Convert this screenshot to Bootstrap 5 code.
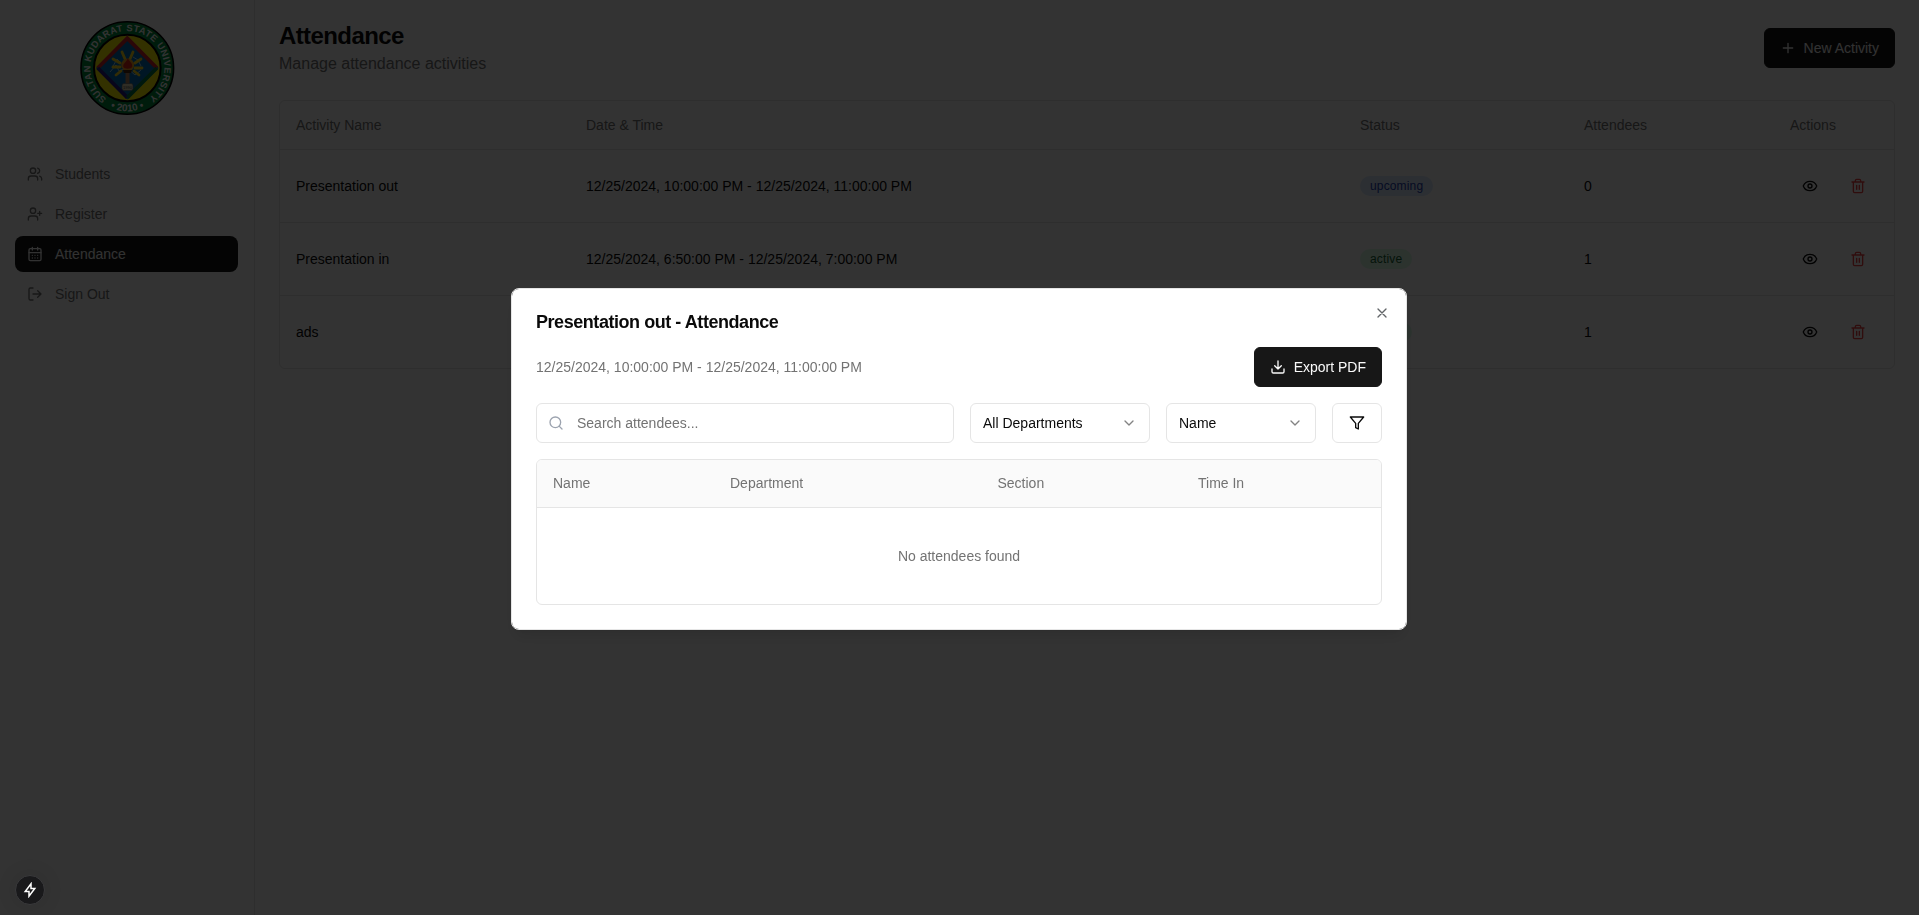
<!DOCTYPE html>
<html lang="en">
<head>
<meta charset="utf-8">
<meta name="viewport" content="width=device-width, initial-scale=1">
<title>Attendance</title>
<link href="https://cdn.jsdelivr.net/npm/bootstrap@5.3.0/dist/css/bootstrap.min.css" rel="stylesheet">
<style>
  body { font-family: "Liberation Sans", Arial, sans-serif; font-size: 14px; line-height: 20px; color: #0a0a0a; background: #fff; overflow: hidden; }
  .ico { width: 16px; height: 16px; flex: none; fill: none; stroke: currentColor; stroke-width: 2; stroke-linecap: round; stroke-linejoin: round; }
  .muted { color: #737373; }
  .danger-ico { color: #ef4444; }
  .side { width: 255px; border-right: 1px solid #e5e5e5; padding: 20px 16px 0 15px; }
  .seal { width: 96px; height: 96px; margin-left: 64px; margin-bottom: 40px; }
  .side .nav { gap: 4px; }
  .side .nav-link { height: 36px; padding: 0 12px; gap: 12px; color: #737373; border-radius: 8px; }
  .side .nav-link.active { background: #171717; color: #fafafa; }
  .content { padding: 20px 24px; }
  .page-title { font-size: 24px; line-height: 32px; font-weight: 700; letter-spacing: -.6px; }
  .page-sub { font-size: 16px; line-height: 24px; }
  .btn-dark-solid { --bs-btn-bg: #171717; --bs-btn-color: #fafafa; --bs-btn-border-color: #171717; --bs-btn-hover-bg: #333; --bs-btn-hover-color: #fafafa; height: 40px; padding: 0 15px; gap: 8px; font-size: 14px; line-height: 20px; border-radius: 6px; }
  .frame { border: 1px solid #e5e5e5; border-radius: 6px; overflow: hidden; }
  .frame .table { --bs-table-bg: transparent; table-layout: fixed; border-collapse: separate; border-spacing: 0; color: inherit; }
  .frame .table > :not(caption) > * > * { padding: 0 16px; border-bottom: 1px solid #e5e5e5; vertical-align: middle; font-weight: 400; color: inherit; }
  .frame .table > tbody > tr:last-child > * { border-bottom: 0; }
  .frame .table > thead > tr > * { height: 49px; color: #737373; }
  .activities > tbody > tr > td { height: 73px; }
  .activities > tbody > tr:last-child > td { height: 72px; }
  .act { width: 40px; height: 40px; }
  .pill { display: block; width: fit-content; font-size: 12px; line-height: 16px; padding: 2px 10px; border-radius: 10px; letter-spacing: .15px; }
  .pill-up { background: #dbeafe; color: #1e40af; }
  .pill-on { background: #dcfce7; color: #166534; }
  .modal-backdrop { --bs-backdrop-opacity: .8; }
  .att-modal { padding-right: 1px; }
  .modal-dialog { --bs-modal-width: 896px; margin-top: 288px; }
  .modal-content { border: 1px solid #e5e5e5; border-radius: 8px; padding: 24px; gap: 16px; color: #0a0a0a; box-shadow: 0 10px 15px -3px rgba(0,0,0,.1), 0 4px 6px -4px rgba(0,0,0,.1); }
  .dlg-title { font-size: 18px; line-height: 18px; font-weight: 700; letter-spacing: -.45px; }
  .dlg-close { position: absolute; top: 16px; right: 16px; opacity: .7; line-height: 0; }
  .field { height: 40px; border: 1px solid #e5e5e5; border-radius: 6px; padding: 0 12px; font-size: 14px; background: #fff; color: #0a0a0a; }
  .search-ico { position: absolute; left: 12px; top: 12px; color: #9ca3af; }
  .search-in { width: 100%; padding-left: 40px; }
  .search-in::placeholder { color: #737373; opacity: 1; }
  .chev { opacity: .5; }
  .attendees > thead { background: #fafafa; }
  .frame .attendees > thead > tr > * { height: 48px; padding-bottom: 1px; }
  .attendees > tbody > tr > td { height: 96px; }
  .dev-badge { position: fixed; left: 15px; bottom: 10px; width: 30px; height: 30px; z-index: 2000; border-radius: 50%; background: #19191b; border: 1px solid #3a3a3c; color: #fff; box-shadow: 0 0 20px rgba(0,0,0,.12); }
  .dev-badge .ico { stroke-width: 1.5; stroke-linecap: butt; stroke-linejoin: miter; }
</style>
</head>
<body>
<svg class="d-none">
  <symbol id="eye" viewBox="0 0 24 24"><path d="M2.06 12.35a1 1 0 0 1 0-.7 10.75 10.75 0 0 1 19.88 0 1 1 0 0 1 0 .7 10.75 10.75 0 0 1-19.88 0"/><circle cx="12" cy="12" r="3"/></symbol>
  <symbol id="trash" viewBox="0 0 24 24"><path d="M3 6h18M19 6v14c0 1-1 2-2 2H7c-1 0-2-1-2-2V6M8 6V4c0-1 1-2 2-2h4c1 0 2 1 2 2v2M10 11v6M14 11v6"/></symbol>
  <symbol id="chevron" viewBox="0 0 24 24"><path d="m6 9 6 6 6-6"/></symbol>
</svg>

<div class="d-flex vh-100">
  <aside class="side flex-shrink-0">
    <svg class="seal d-block" viewBox="0 0 96 96">
      <defs>
        <path id="ring-top" d="M27.6 78.7A37 37 0 1 1 69 78.7"/>
        <path id="ring-bottom" d="M20.5 81.2A43.3 43.3 0 0 0 76.1 81.2"/>
      </defs>
      <circle cx="48.3" cy="48" r="46.3" fill="#008a3c" stroke="#000" stroke-width="1.6"/>
      <circle cx="48.3" cy="48" r="33.3" fill="#fff200" stroke="#000" stroke-width="2"/>
      <path d="M48.3 16.5 17 48l31.3 31.5L79.6 48z" fill="#0070b8"/>
      <path d="M18.8 48 48.3 18.3 77.8 48" fill="none" stroke="#d8232a" stroke-width="3.8"/>
      <path d="M18.8 48 48.3 77.7" fill="none" stroke="#2c1a85" stroke-width="3.8"/>
      <path d="M77.8 48 48.3 77.7" fill="none" stroke="#007a40" stroke-width="3.8"/>
      <path d="m31 52 6-7 3 6 8-3 8 7 6-5M33 48l5-9 4 4M54 37l5 3 3 6" fill="none" stroke="#9ed2ee" stroke-width="1"/>
      <g stroke="#ffdb1a" stroke-width="2.8" stroke-linecap="round">
        <path d="M43 32l3 7M54 32l-3 7M34 39l7 4M62 39l-6 4M34 47h7M63 48h-7M37 55l5-4M60 55l-5-4"/>
      </g>
      <circle cx="48.7" cy="45" r="6.5" fill="#f5a623"/>
      <path d="M48.7 38c1 3 5 5 4.5 8.5-.5 3-8.5 3-9 0C44 43 48 42 48.7 38z" fill="#e02418"/>
      <path d="M44 50h9l-1 3h-7z" fill="#4b2a12"/>
      <path d="M46.5 53h4v11h-4z" fill="#b08060"/>
      <rect x="43" y="63.5" width="11" height="7" rx="2" fill="#e9dfb8" stroke="#666" stroke-width=".6"/>
      <text x="48.5" y="68.5" font-size="4" text-anchor="middle" fill="#444">1990</text>
      <g fill="#fff" font-family="Liberation Sans, Arial, sans-serif" font-weight="700">
        <text font-size="9.3"><textPath href="#ring-top" textLength="187" lengthAdjust="spacing">SULTAN KUDARAT STATE UNIVERSITY</textPath></text>
        <text font-size="10" text-anchor="middle"><textPath href="#ring-bottom" startOffset="50%">• 2010 •</textPath></text>
      </g>
    </svg>
    <nav class="nav flex-column">
      <a class="nav-link d-flex align-items-center" href="#"><svg class="ico" viewBox="0 0 24 24"><path d="M16 21v-2a4 4 0 0 0-4-4H6a4 4 0 0 0-4 4v2"/><circle cx="9" cy="7" r="4"/><path d="M22 21v-2a4 4 0 0 0-3-3.87M16 3.13a4 4 0 0 1 0 7.75"/></svg>Students</a>
      <a class="nav-link d-flex align-items-center" href="#"><svg class="ico" viewBox="0 0 24 24"><path d="M16 21v-2a4 4 0 0 0-4-4H6a4 4 0 0 0-4 4v2"/><circle cx="9" cy="7" r="4"/><path d="M19 8v6M22 11h-6"/></svg>Register</a>
      <a class="nav-link active d-flex align-items-center" href="#"><svg class="ico" viewBox="0 0 24 24"><path d="M8 2v4M16 2v4"/><rect width="18" height="18" x="3" y="4" rx="2"/><path d="M3 10h18M8 14h.01M12 14h.01M16 14h.01M8 18h.01M12 18h.01M16 18h.01"/></svg>Attendance</a>
      <a class="nav-link d-flex align-items-center" href="#"><svg class="ico" viewBox="0 0 24 24"><path d="M9 21H5a2 2 0 0 1-2-2V5a2 2 0 0 1 2-2h4M16 17l5-5-5-5M21 12H9"/></svg>Sign Out</a>
    </nav>
  </aside>

  <main class="content flex-grow-1">
    <div class="d-flex justify-content-between align-items-center mb-4">
      <div>
        <h1 class="page-title m-0">Attendance</h1>
        <p class="page-sub muted m-0">Manage attendance activities</p>
      </div>
      <button class="btn btn-dark-solid d-flex align-items-center"><svg class="ico" viewBox="0 0 24 24"><path d="M5 12h14M12 5v14"/></svg>New Activity</button>
    </div>
    <div class="frame">
      <table class="table activities m-0">
        <colgroup><col style="width:290px"><col style="width:774px"><col style="width:224px"><col style="width:206px"><col></colgroup>
        <thead><tr><th>Activity Name</th><th>Date &amp; Time</th><th>Status</th><th>Attendees</th><th>Actions</th></tr></thead>
        <tbody>
          <tr><td>Presentation out</td><td>12/25/2024, 10:00:00 PM - 12/25/2024, 11:00:00 PM</td><td><span class="pill pill-up">upcoming</span></td><td>0</td>
            <td><div class="d-flex gap-2"><span class="act d-flex align-items-center justify-content-center"><svg class="ico"><use href="#eye"/></svg></span><span class="act d-flex align-items-center justify-content-center danger-ico"><svg class="ico"><use href="#trash"/></svg></span></div></td></tr>
          <tr><td>Presentation in</td><td>12/25/2024, 6:50:00 PM - 12/25/2024, 7:00:00 PM</td><td><span class="pill pill-on">active</span></td><td>1</td>
            <td><div class="d-flex gap-2"><span class="act d-flex align-items-center justify-content-center"><svg class="ico"><use href="#eye"/></svg></span><span class="act d-flex align-items-center justify-content-center danger-ico"><svg class="ico"><use href="#trash"/></svg></span></div></td></tr>
          <tr><td>ads</td><td></td><td><span class="pill pill-on">active</span></td><td>1</td>
            <td><div class="d-flex gap-2"><span class="act d-flex align-items-center justify-content-center"><svg class="ico"><use href="#eye"/></svg></span><span class="act d-flex align-items-center justify-content-center danger-ico"><svg class="ico"><use href="#trash"/></svg></span></div></td></tr>
        </tbody>
      </table>
    </div>
  </main>
</div>

<div class="modal-backdrop show"></div>
<div class="modal att-modal d-block" tabindex="-1" role="dialog">
  <div class="modal-dialog">
    <div class="modal-content">
      <h2 class="dlg-title m-0">Presentation out - Attendance</h2>
      <button class="dlg-close btn p-0 border-0" aria-label="Close"><svg class="ico" viewBox="0 0 24 24"><path d="M18 6 6 18M6 6l12 12"/></svg></button>
      <div class="d-flex justify-content-between align-items-center">
        <span class="muted">12/25/2024, 10:00:00 PM - 12/25/2024, 11:00:00 PM</span>
        <button class="btn btn-dark-solid d-flex align-items-center"><svg class="ico" viewBox="0 0 24 24"><path d="M21 15v4a2 2 0 0 1-2 2H5a2 2 0 0 1-2-2v-4M7 10l5 5 5-5M12 15V3"/></svg>Export PDF</button>
      </div>
      <div class="d-flex gap-3">
        <div class="position-relative flex-grow-1">
          <svg class="ico search-ico" viewBox="0 0 24 24"><circle cx="11" cy="11" r="8"/><path d="m21 21-4.3-4.3"/></svg>
          <input class="field search-in" type="text" placeholder="Search attendees...">
        </div>
        <button class="field d-flex align-items-center justify-content-between" style="width:180px">All Departments<svg class="ico chev"><use href="#chevron"/></svg></button>
        <button class="field d-flex align-items-center justify-content-between" style="width:150px">Name<svg class="ico chev"><use href="#chevron"/></svg></button>
        <button class="field d-flex align-items-center justify-content-center" style="width:50px" aria-label="Filter"><svg class="ico" viewBox="0 0 24 24"><path d="M22 3H2l8 9.46V19l4 2v-8.54z"/></svg></button>
      </div>
      <div class="frame">
        <table class="table attendees m-0">
          <colgroup><col style="width:177px"><col style="width:267.5px"><col style="width:200.5px"><col></colgroup>
          <thead><tr><th>Name</th><th>Department</th><th>Section</th><th>Time In</th></tr></thead>
          <tbody><tr><td colspan="4" class="text-center"><span class="muted">No attendees found</span></td></tr></tbody>
        </table>
      </div>
    </div>
  </div>
</div>

<div class="dev-badge d-flex align-items-center justify-content-center"><svg class="ico" viewBox="0 0 16 16"><path d="M9 1.8v4.6h3.8L7 14.2V9.6H3.200z"/></svg></div>
<script src="https://cdn.jsdelivr.net/npm/bootstrap@5.3.0/dist/js/bootstrap.bundle.min.js"></script>
</body>
</html>
